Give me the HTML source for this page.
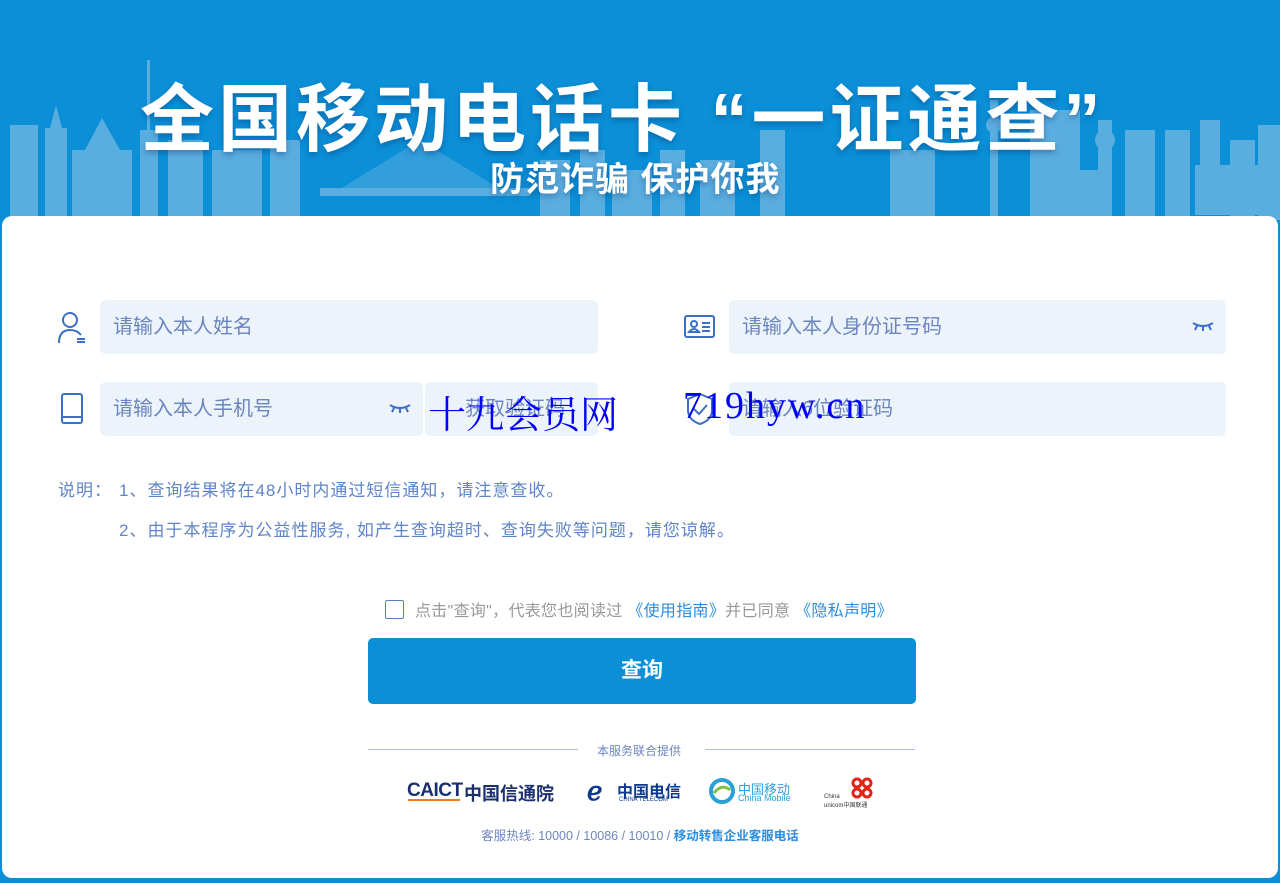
<!DOCTYPE html>
<html><head><meta charset="utf-8"><style>
*{margin:0;padding:0;box-sizing:border-box}
body{width:1280px;height:883px;background:#0b8fd7;font-family:"Liberation Sans","Noto Sans CJK SC",sans-serif;position:relative;overflow:hidden}
.abs{position:absolute}
.card{left:2px;top:216px;width:1276px;height:662px;background:#fff;border-radius:10px}
.inp{background:#edf3fb;border-radius:6px;height:54px;color:#6b86bf;font-size:20px;line-height:54px;padding-left:13px}
.note{color:#5f84c8;font-size:17px;letter-spacing:1px}
.title{color:#fff;font-weight:bold;text-shadow:0 3px 6px rgba(0,40,100,.35);white-space:nowrap}
</style></head><body>
<svg class="abs" style="left:0;top:0" width="1280" height="220">
<g fill="#7cbbe3" opacity=".7">
<rect x="10" y="125" width="28" height="95"/><rect x="45" y="128" width="22" height="92"/><polygon points="50,128 56,105 62,128"/>
<rect x="72" y="150" width="60" height="70"/><polygon points="85,150 102,118 120,150"/>
<rect x="140" y="130" width="18" height="90"/><rect x="147" y="60" width="3" height="70"/>
<rect x="168" y="140" width="35" height="80"/><rect x="212" y="150" width="50" height="70"/><rect x="270" y="140" width="30" height="80"/>
<path d="M330 195 L420 140 L510 195Z" opacity=".5"/><rect x="320" y="188" width="210" height="8"/>
<rect x="540" y="160" width="30" height="60"/><rect x="580" y="150" width="25" height="70"/><rect x="612" y="170" width="40" height="50"/>
<rect x="660" y="150" width="25" height="70"/><rect x="700" y="160" width="35" height="60"/><rect x="760" y="130" width="25" height="90"/>
<rect x="990" y="100" width="8" height="120"/><circle cx="994" cy="125" r="8"/><rect x="1030" y="110" width="50" height="110"/>
<rect x="890" y="150" width="45" height="70"/><rect x="1195" y="165" width="80" height="50"/><rect x="1060" y="170" width="40" height="50"/>
<rect x="1098" y="120" width="14" height="100"/><circle cx="1105" cy="140" r="10"/><rect x="1125" y="130" width="30" height="90"/>
<rect x="1165" y="130" width="25" height="90"/><rect x="1200" y="120" width="20" height="60"/><rect x="1230" y="140" width="25" height="80"/><rect x="1258" y="125" width="22" height="95"/>
</g></svg>
<div class="abs title" style="left:140px;top:60px;font-size:74px;letter-spacing:4px">全国移动电话卡 “一证通查”</div>
<div class="abs title" style="left:490px;top:152px;font-size:34px;letter-spacing:1px">防范诈骗 保护你我</div>
<div class="abs card"></div>

<svg class="abs" style="left:57px;top:310px" width="30" height="34" fill="none" stroke="#3b6fc8" stroke-width="2"><circle cx="13" cy="10" r="7"/><path d="M2 33 Q2 20 13 20 Q20 20 24 25"/><path d="M20 29h8M20 32h8"/></svg>
<div class="abs inp" style="left:100px;top:300px;width:498px">请输入本人姓名</div>
<svg class="abs" style="left:684px;top:315px" width="32" height="24" fill="none" stroke="#3b6fc8" stroke-width="2"><rect x="1" y="1" width="29" height="21" rx="2"/><circle cx="10" cy="9" r="3"/><path d="M5 17 Q10 11 15 17Z M18 8h8M18 12h8M18 16h8"/></svg>
<div class="abs inp" style="left:729px;top:300px;width:497px">请输入本人身份证号码</div>
<svg class="abs" style="left:1191px;top:320px" width="24" height="12" fill="none" stroke="#3b6fc8" stroke-width="2"><path d="M2 3 Q12 9 22 3M6 6l-2 4M12 7v4M18 6l2 4"/></svg>
<svg class="abs" style="left:61px;top:393px" width="22" height="32" fill="none" stroke="#3b6fc8" stroke-width="2"><rect x="1" y="1" width="20" height="29" rx="2"/><path d="M1 24h20"/></svg>
<div class="abs inp" style="left:100px;top:382px;width:323px">请输入本人手机号</div>
<svg class="abs" style="left:388px;top:402px" width="24" height="12" fill="none" stroke="#3b6fc8" stroke-width="2"><path d="M2 3 Q12 9 22 3M6 6l-2 4M12 7v4M18 6l2 4"/></svg>
<div class="abs inp" style="left:425px;top:382px;width:173px;padding-left:40px">获取验证码</div>
<svg class="abs" style="left:686px;top:392px" width="28" height="34" fill="none" stroke="#3b6fc8" stroke-width="2"><path d="M14 2 L26 7 V18 Q26 28 14 32 Q2 28 2 18 V7Z"/><path d="M8 17l5 5 8-9"/></svg>
<div class="abs inp" style="left:729px;top:382px;width:497px">请输入6位验证码</div>
<div class="abs" style="left:428px;top:384px;font-family:'Liberation Serif','Noto Serif CJK SC',serif;font-size:38px;color:#0000ff">十九会员网</div>
<div class="abs" style="left:683px;top:384px;font-family:'Liberation Serif',serif;font-size:38px;color:#0000ff;letter-spacing:2px">719hyw.cn</div>

<div class="abs note" style="left:58px;top:476px">说明：</div>
<div class="abs note" style="left:119px;top:476px">1、查询结果将在48小时内通过短信通知，请注意查收。</div>
<div class="abs note" style="left:119px;top:516px">2、由于本程序为公益性服务, 如产生查询超时、查询失败等问题，请您谅解。</div>

<div class="abs" style="left:385px;top:600px;width:19px;height:19px;border:1.5px solid #5b7fc7;border-radius:2px"></div>
<div class="abs" style="left:415px;top:597px;font-size:16px;color:#999;letter-spacing:0.3px">点击"查询"，代表您也阅读过 <span style="color:#2a8ee0">《使用指南》</span>并已同意 <span style="color:#2a8ee0">《隐私声明》</span></div>
<div class="abs" style="left:368px;top:638px;width:548px;height:66px;background:#0b8fd7;border-radius:5px;color:#fff;font-size:21px;font-weight:bold;text-align:center;line-height:66px">查询</div>

<div class="abs" style="left:368px;top:749px;width:210px;height:1px;background:#aac0e0"></div>
<div class="abs" style="left:705px;top:749px;width:210px;height:1px;background:#aac0e0"></div>
<div class="abs" style="left:597px;top:742px;font-size:12px;color:#6b86bf">本服务联合提供</div>

<div class="abs" style="left:407px;top:780px;font-size:19px;font-weight:bold;color:#1b2f6e;letter-spacing:-0.5px">CAICT</div>
<div class="abs" style="left:408px;top:799px;width:52px;height:2px;background:#e87a2a"></div>
<div class="abs" style="left:464px;top:780px;font-size:18px;color:#1b2f6e;font-weight:bold">中国信通院</div>
<div class="abs" style="left:587px;top:776px;font-size:26px;color:#0d3a8c;font-weight:bold">ℯ</div>
<div class="abs" style="left:617px;top:778px;font-size:16px;color:#0d3a8c;font-weight:bold">中国电信</div>
<div class="abs" style="left:619px;top:797px;font-size:6px;color:#0d3a8c">CHINA TELECOM</div>
<svg class="abs" style="left:709px;top:778px" width="26" height="26"><circle cx="13" cy="13" r="11" fill="none" stroke="#2ba0d6" stroke-width="4"/><path d="M5 15 Q13 5 21 12" stroke="#7bc043" stroke-width="3" fill="none"/></svg>
<div class="abs" style="left:738px;top:779px;font-size:13px;color:#2ba0d6">中国移动</div>
<div class="abs" style="left:738px;top:793px;font-size:9px;color:#2ba0d6">China Mobile</div>
<svg class="abs" style="left:848px;top:776px" width="28" height="24" fill="none" stroke="#e2231a" stroke-width="3"><circle cx="9" cy="7" r="4"/><circle cx="19" cy="7" r="4"/><circle cx="9" cy="17" r="4"/><circle cx="19" cy="17" r="4"/></svg>
<div class="abs" style="left:824px;top:794px;font-size:6px;color:#333">China<br>unicom中国联通</div>

<div class="abs" style="left:0;width:1280px;top:825px;text-align:center;font-size:12.5px;color:#6b86bf">客服热线: 10000 / 10086 / 10010 / <span style="color:#2a8ee0;font-weight:bold">移动转售企业客服电话</span></div>
</body></html>
